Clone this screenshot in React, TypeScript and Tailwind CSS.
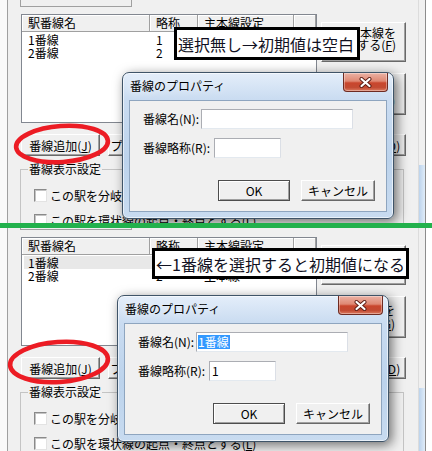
import React from "react";

const F = "font-['Noto_Sans_CJK_JP','Noto_Sans',sans-serif]";

function Btn({
  className = "",
  children,
  def = false,
}: {
  className?: string;
  children: React.ReactNode;
  def?: boolean;
}) {
  return (
    <div
      className={`flex shrink-0 bg-[#f0f0f0] text-[12px] whitespace-nowrap text-black ${
        def
          ? "border border-[#4d4d4d] shadow-[inset_1px_1px_0_#ffffff,inset_-1px_-1px_0_#a0a0a0]"
          : "border border-t-white border-l-white border-r-[#696969] border-b-[#696969] shadow-[inset_-1px_-1px_0_#a0a0a0]"
      } ${className}`}
    >
      {children}
    </div>
  );
}

function HeaderCell({ className, children }: { className: string; children?: React.ReactNode }) {
  return (
    <div
      className={`flex h-[17px] shrink-0 items-center border-r border-b border-[#a0a0a0] bg-[#f0f0f0] pl-[6px] text-[12px] leading-[14px] whitespace-nowrap shadow-[inset_1px_1px_0_#ffffff] ${className}`}
    >
      {children}
    </div>
  );
}

function Row({ name, abbr, main, selected }: { name: string; abbr: string; main: string; selected?: boolean }) {
  return (
    <div className={`ml-[2px] flex h-[13px] items-center text-[12px] leading-[13px] ${selected ? "bg-[#e8e8e8]" : ""}`}>
      <div className="w-[126px] shrink-0 pl-[4px] whitespace-nowrap">{name}</div>
      <div className="w-[48px] shrink-0 pl-[6px]">{abbr}</div>
      <div className="w-[96px] shrink-0 pl-[6px] whitespace-nowrap">{main}</div>
    </div>
  );
}

function ListView({ filled }: { filled: boolean }) {
  return (
    <div className="ml-px h-[109px] w-[296px] shrink-0 overflow-hidden border border-[#828790] bg-white">
      <div className="flex h-[17px]">
        <HeaderCell className="w-[128px]">駅番線名</HeaderCell>
        <HeaderCell className="w-[48px]">略称</HeaderCell>
        <HeaderCell className="w-[96px]">主本線設定</HeaderCell>
        <HeaderCell className="w-[22px]" />
      </div>
      <div className="pt-px">
        <Row name="1番線" abbr="1" main="" selected={filled} />
        <Row name="2番線" abbr="2" main="主本線" />
      </div>
    </div>
  );
}

function Check() {
  return (
    <div className="h-[13px] w-[13px] shrink-0 border border-[#8a8a8a] border-r-[#e3e3e3] border-b-[#e3e3e3] bg-white shadow-[inset_1px_1px_0_#c4c4c4]" />
  );
}

function CloseBtn() {
  return (
    <div className="mr-[5px] flex h-[19px] w-[45px] shrink-0 items-center justify-center rounded-b-[4px] border border-t-0 border-[#6e2b22] bg-[linear-gradient(180deg,#ebb2a5_0%,#df8873_45%,#c9462d_55%,#c24a32_80%,#dc7b60_100%)] shadow-[inset_0_0_0_1px_rgba(255,255,255,0.35)]">
      <svg width="13" height="11" viewBox="0 0 13 11">
        <path d="M2.5 2 L10.5 9 M10.5 2 L2.5 9" stroke="#5b1c14" strokeWidth="4" strokeLinecap="round" fill="none" />
        <path d="M2.5 2 L10.5 9 M10.5 2 L2.5 9" stroke="#ffffff" strokeWidth="2.2" strokeLinecap="round" fill="none" />
      </svg>
    </div>
  );
}

function Field({ className, children }: { className: string; children?: React.ReactNode }) {
  return (
    <div
      className={`flex h-[20px] shrink-0 items-center border border-[#abadb3] border-r-[#dbdfe6] border-b-[#e3e9ef] bg-white text-[12px] leading-[14px] ${className}`}
    >
      {children}
    </div>
  );
}

function Dialog({ filled }: { filled: boolean }) {
  return (
    <div className="flex h-[147px] w-[272px] flex-col rounded-t-[7px] rounded-b-[6px] border border-[#3f5468] bg-[linear-gradient(180deg,#e4eefa_0%,#cadcf1_18%,#bcd3ec_60%,#c8dbf0_100%)] shadow-[inset_0_0_0_1px_rgba(255,255,255,0.6),3px_3px_12px_rgba(0,0,0,0.55)]">
      <div className="flex h-[27px] shrink-0 items-start justify-between">
        <span className="mt-[5px] pl-[7px] text-[12px] leading-[16px] whitespace-nowrap text-black [text-shadow:0_0_8px_rgba(255,255,255,0.95)]">
          番線のプロパティ
        </span>
        <CloseBtn />
      </div>
      <div className="mx-[6px] mb-[6px] flex flex-1 flex-col border border-[#8ea5bf] bg-[#f0f0f0] text-black">
        <div className="mt-[8px] flex items-center pl-[13px]">
          <span className="w-[58px] shrink-0 text-[12px] leading-[14px] whitespace-nowrap">番線名(N):</span>
          <Field className="w-[152px]">
            {filled ? <span className="ml-px bg-[#3399ff] pr-px text-white">1番線</span> : null}
          </Field>
        </div>
        <div className="mt-[9px] flex items-center pl-[13px]">
          <span className="w-[71px] shrink-0 text-[12px] leading-[14px] whitespace-nowrap">番線略称(R):</span>
          <Field className="w-[67px]">{filled ? <span className="ml-[2px]">1</span> : null}</Field>
        </div>
        <div className="mt-[22px] flex">
          <Btn def className="ml-[88px] h-[21px] w-[72px] items-center justify-center leading-[13px]">
            OK
          </Btn>
          <Btn className="ml-[11px] h-[21px] w-[74px] items-center justify-center leading-[13px]">キャンセル</Btn>
        </div>
      </div>
    </div>
  );
}

function Ellipse({ className, rx, ry }: { className: string; rx: number; ry: number }) {
  return (
    <svg className={className} width="112" height="54" viewBox="0 0 112 54">
      <ellipse
        cx="56"
        cy="27"
        rx={rx}
        ry={ry}
        fill="none"
        stroke="#ec1c24"
        strokeWidth="4.6"
        transform="rotate(-4 56 27)"
      />
    </svg>
  );
}

function Scene({ filled }: { filled: boolean }) {
  return (
    <div className={`relative flex h-[228px] w-[432px] bg-white text-black ${F}`}>
      <div className="w-[7px] shrink-0 bg-[#fafafa]" />
      <div className="w-px shrink-0 bg-[#a0a0a0]" />
      <div className="flex w-[410px] shrink-0 flex-col bg-[#f0f0f0] px-[12px]">
        <div className="h-[7px] w-[112px] shrink-0 border-x border-b border-[#a0a0a0]" />
        <div className="mt-[7px] flex shrink-0">
          <ListView filled={filled} />
          <div className="ml-[4px] flex w-[85px] flex-col">
            <Btn className="mt-[8px] h-[40px] w-[85px] flex-col items-end justify-start pt-[4px] pr-[9px] text-right leading-[12px]">
              <span>主本線を</span>
              <span>
                設定する(<u>F</u>)
              </span>
            </Btn>
            <Btn className="mt-[11px] h-[42px] w-[85px] flex-col items-end justify-center pr-[10px] text-right leading-[14px]">
              <span>主本線設定を</span>
              <span>
                解除する(<u>G</u>)
              </span>
            </Btn>
          </div>
        </div>
        <div className="mt-[11px] flex h-[22px] shrink-0">
          <Btn className="ml-px h-[22px] w-[79px] items-center justify-center leading-[13px]">
            番線追加(<u>J</u>)
          </Btn>
          <Btn className="ml-[8px] h-[22px] w-[80px] items-center justify-center leading-[13px]">
            プロパティ(<u>P</u>)
          </Btn>
          <Btn className="ml-[8px] h-[22px] w-[80px] items-center justify-center leading-[13px]">
            上へ移動(<u>U</u>)
          </Btn>
          <Btn className="ml-auto h-[22px] w-[76px] items-center justify-center leading-[13px]">
            番線削除(<u>D</u>)
          </Btn>
        </div>
        <fieldset className="mr-[2px] mt-[6px] h-[80px] shrink-0 border border-[#c4c4c4]">
          <legend className="ml-[7px] px-px text-[12px] leading-[14px]">番線表示設定</legend>
          <div className="mt-[13px] flex h-[13px] items-center pl-[13px]">
            <Check />
            <span className="ml-[3px] text-[12px] leading-[13px] whitespace-nowrap">
              この駅を分岐駅とする(<u>B</u>)
            </span>
          </div>
          <div className="mt-[12px] flex h-[13px] items-center pl-[13px]">
            <Check />
            <span className="ml-[3px] text-[12px] leading-[13px] whitespace-nowrap">
              この駅を環状線の起点・終点とする(<u>L</u>)
            </span>
          </div>
        </fieldset>
      </div>
      <div className="w-px shrink-0 bg-[#dcdcdc]" />
      <div className="w-[6px] shrink-0 bg-[#f0f0f0]">
        <div className="mt-[165px] h-[63px] bg-[linear-gradient(90deg,#bcd3ec,#e0ecf8)]" />
      </div>
      <div className="w-px shrink-0 bg-[#8c8c8c]" />
      <div className="flex-1 bg-white" />

      {filled ? (
        <>
          <div className="absolute left-[152px] top-[25px] flex h-[31px] w-[257px] items-center border-[3px] border-black bg-white pl-px text-[16px] leading-none whitespace-nowrap text-[#111122]">
            ←1番線を選択すると初期値になる
          </div>
          <Ellipse className="absolute left-[3px] top-[112px]" rx={49} ry={20} />
          <div className="absolute left-[117px] top-[72px]">
            <Dialog filled />
          </div>
        </>
      ) : (
        <>
          <div className="absolute left-[174px] top-[27px] flex h-[33px] w-[186px] items-center border-[3px] border-black bg-white pl-px text-[16px] leading-none whitespace-nowrap text-[#111122]">
            選択無し→初期値は空白
          </div>
          <Ellipse className="absolute left-[6px] top-[117px]" rx={46} ry={18} />
          <div className="absolute left-[122px] top-[72px]">
            <Dialog filled={false} />
          </div>
        </>
      )}
    </div>
  );
}

export default function App() {
  return (
    <div className="h-[451px] w-[432px] overflow-hidden bg-white">
      <div className="h-[223px] overflow-hidden">
        <Scene filled={false} />
      </div>
      <div className="h-[5px] bg-[#22b14c]" />
      <div className="h-[223px] overflow-hidden">
        <div className="-mt-[5px]">
          <Scene filled />
        </div>
      </div>
    </div>
  );
}
